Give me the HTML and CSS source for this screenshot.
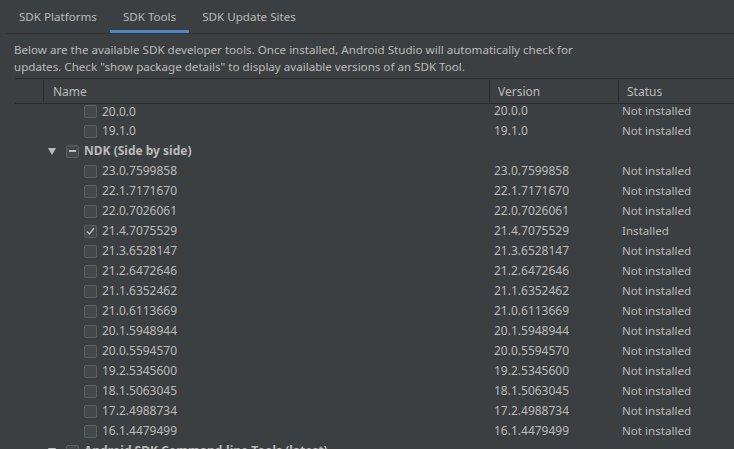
FILE: index.html
```html
<html lang="en">
<head>
    <meta charset="UTF-8">
    <title>SDK Tools</title>
    <link rel="stylesheet" href="styles.css">
</head>
<body>
    <div class="tabs">
        <span class="tab">SDK Platforms</span>
        <span class="tab active">SDK Tools</span>
        <span class="tab">SDK Update Sites</span>
    </div>
    <p class="desc">Below are the available SDK developer tools. Once installed, Android Studio will automatically check for<br>updates. Check "show package details" to display available versions of an SDK Tool.</p>
    <div class="table">
        <div class="head">
            <span class="hcell first"></span>
            <span class="hcell hname">Name</span>
            <span class="hcell hver">Version</span>
            <span class="hcell hstatus">Status</span>
        </div>
        <div class="body">
            <div class="row top"><span class="name child"><i class="box"></i>20.0.0</span><span class="ver">20.0.0</span><span class="status">Not installed</span></div>
            <div class="row"><span class="name child"><i class="box"></i>19.1.0</span><span class="ver">19.1.0</span><span class="status">Not installed</span></div>
            <div class="row group"><span class="name"><i class="arrow"></i><i class="box part"></i>NDK (Side by side)</span></div>
            <div class="row"><span class="name child"><i class="box"></i>23.0.7599858</span><span class="ver">23.0.7599858</span><span class="status">Not installed</span></div>
            <div class="row"><span class="name child"><i class="box"></i>22.1.7171670</span><span class="ver">22.1.7171670</span><span class="status">Not installed</span></div>
            <div class="row"><span class="name child"><i class="box"></i>22.0.7026061</span><span class="ver">22.0.7026061</span><span class="status">Not installed</span></div>
            <div class="row"><span class="name child"><i class="box"><svg width="13" height="13" viewBox="0 0 13 13"><path d="M3 6.5 L5.5 9 L10 3" fill="none" stroke="#bbbbbb" stroke-width="1.4"/></svg></i>21.4.7075529</span><span class="ver">21.4.7075529</span><span class="status">Installed</span></div>
            <div class="row"><span class="name child"><i class="box"></i>21.3.6528147</span><span class="ver">21.3.6528147</span><span class="status">Not installed</span></div>
            <div class="row"><span class="name child"><i class="box"></i>21.2.6472646</span><span class="ver">21.2.6472646</span><span class="status">Not installed</span></div>
            <div class="row"><span class="name child"><i class="box"></i>21.1.6352462</span><span class="ver">21.1.6352462</span><span class="status">Not installed</span></div>
            <div class="row"><span class="name child"><i class="box"></i>21.0.6113669</span><span class="ver">21.0.6113669</span><span class="status">Not installed</span></div>
            <div class="row"><span class="name child"><i class="box"></i>20.1.5948944</span><span class="ver">20.1.5948944</span><span class="status">Not installed</span></div>
            <div class="row"><span class="name child"><i class="box"></i>20.0.5594570</span><span class="ver">20.0.5594570</span><span class="status">Not installed</span></div>
            <div class="row"><span class="name child"><i class="box"></i>19.2.5345600</span><span class="ver">19.2.5345600</span><span class="status">Not installed</span></div>
            <div class="row"><span class="name child"><i class="box"></i>18.1.5063045</span><span class="ver">18.1.5063045</span><span class="status">Not installed</span></div>
            <div class="row"><span class="name child"><i class="box"></i>17.2.4988734</span><span class="ver">17.2.4988734</span><span class="status">Not installed</span></div>
            <div class="row"><span class="name child"><i class="box"></i>16.1.4479499</span><span class="ver">16.1.4479499</span><span class="status">Not installed</span></div>
            <div class="row group"><span class="name"><i class="arrow"></i><i class="box"></i>Android SDK Command-line Tools (latest)</span></div>
        </div>
    </div>
</body>
</html>
```

FILE: styles.css
```css
body {
    margin: 0;
    background-color: #3c3f41;
    color: #bbbbbb;
    font-family: "Noto Sans", "Open Sans", sans-serif;
    font-size: 12px;
    overflow: hidden;
}
.tabs {
    display: flex;
    height: 33px;
    margin-left: 6px;
    border-bottom: 1px solid #323232;
}
.tab {
    padding: 0 13px;
    line-height: 33px;
    font-size: 11.6px;
    position: relative;
}
.tab.active::after {
    content: "";
    position: absolute;
    left: 0;
    right: 0;
    bottom: 0;
    height: 3px;
    background-color: #4a88c7;
}
.desc {
    margin: 7px 0 3px 14px;
    line-height: 17px;
    font-size: 11.6px;
}
.table {
    margin-left: 15px;
    border-top: 1px solid #2b2b2b;
}
.head {
    display: flex;
    height: 24px;
    border-bottom: 1px solid #2b2b2b;
}
.hcell {
    border-right: 1px solid #2b2b2b;
    margin: 1px 0;
    padding-top: 1px;
    line-height: 22px;
}
.first { width: 28px; }
.hname { width: 436px; padding-left: 9px; }
.hver { width: 120px; padding-left: 8px; }
.hstatus { border-right: none; padding-left: 8px; }
.body {
    height: 400px;
    overflow: hidden;
}
.row {
    display: flex;
    height: 20px;
    line-height: 20px;
    white-space: nowrap;
}
.row.top {
    height: 17px;
    line-height: 14px;
}
.row.top .name {
    align-items: flex-start;
    padding-top: 1px;
}
.name {
    width: 474px;
    display: flex;
    align-items: center;
    padding-left: 33px;
    box-sizing: border-box;
}
.name.child { padding-left: 69px; }
.group .name { font-weight: bold; }
.ver {
    width: 129px;
    padding-left: 5px;
    box-sizing: border-box;
}
.status {
    padding-left: 4px;
    font-size: 11.6px;
}
.box {
    display: inline-block;
    flex-shrink: 0;
    width: 13px;
    height: 13px;
    box-sizing: border-box;
    border: 1px solid #5e6060;
    border-radius: 2px;
    background-color: #43494a;
    margin-right: 5px;
    position: relative;
}
.box svg {
    position: absolute;
    left: -1px;
    top: -1px;
}
.box.part::after {
    content: "";
    position: absolute;
    left: 2px;
    right: 2px;
    top: 4.5px;
    height: 2px;
    background-color: #bbbbbb;
}
.arrow {
    width: 0;
    height: 0;
    border-left: 4px solid transparent;
    border-right: 4px solid transparent;
    border-top: 7px solid #bbbbbb;
    margin-right: 10px;
}
```
